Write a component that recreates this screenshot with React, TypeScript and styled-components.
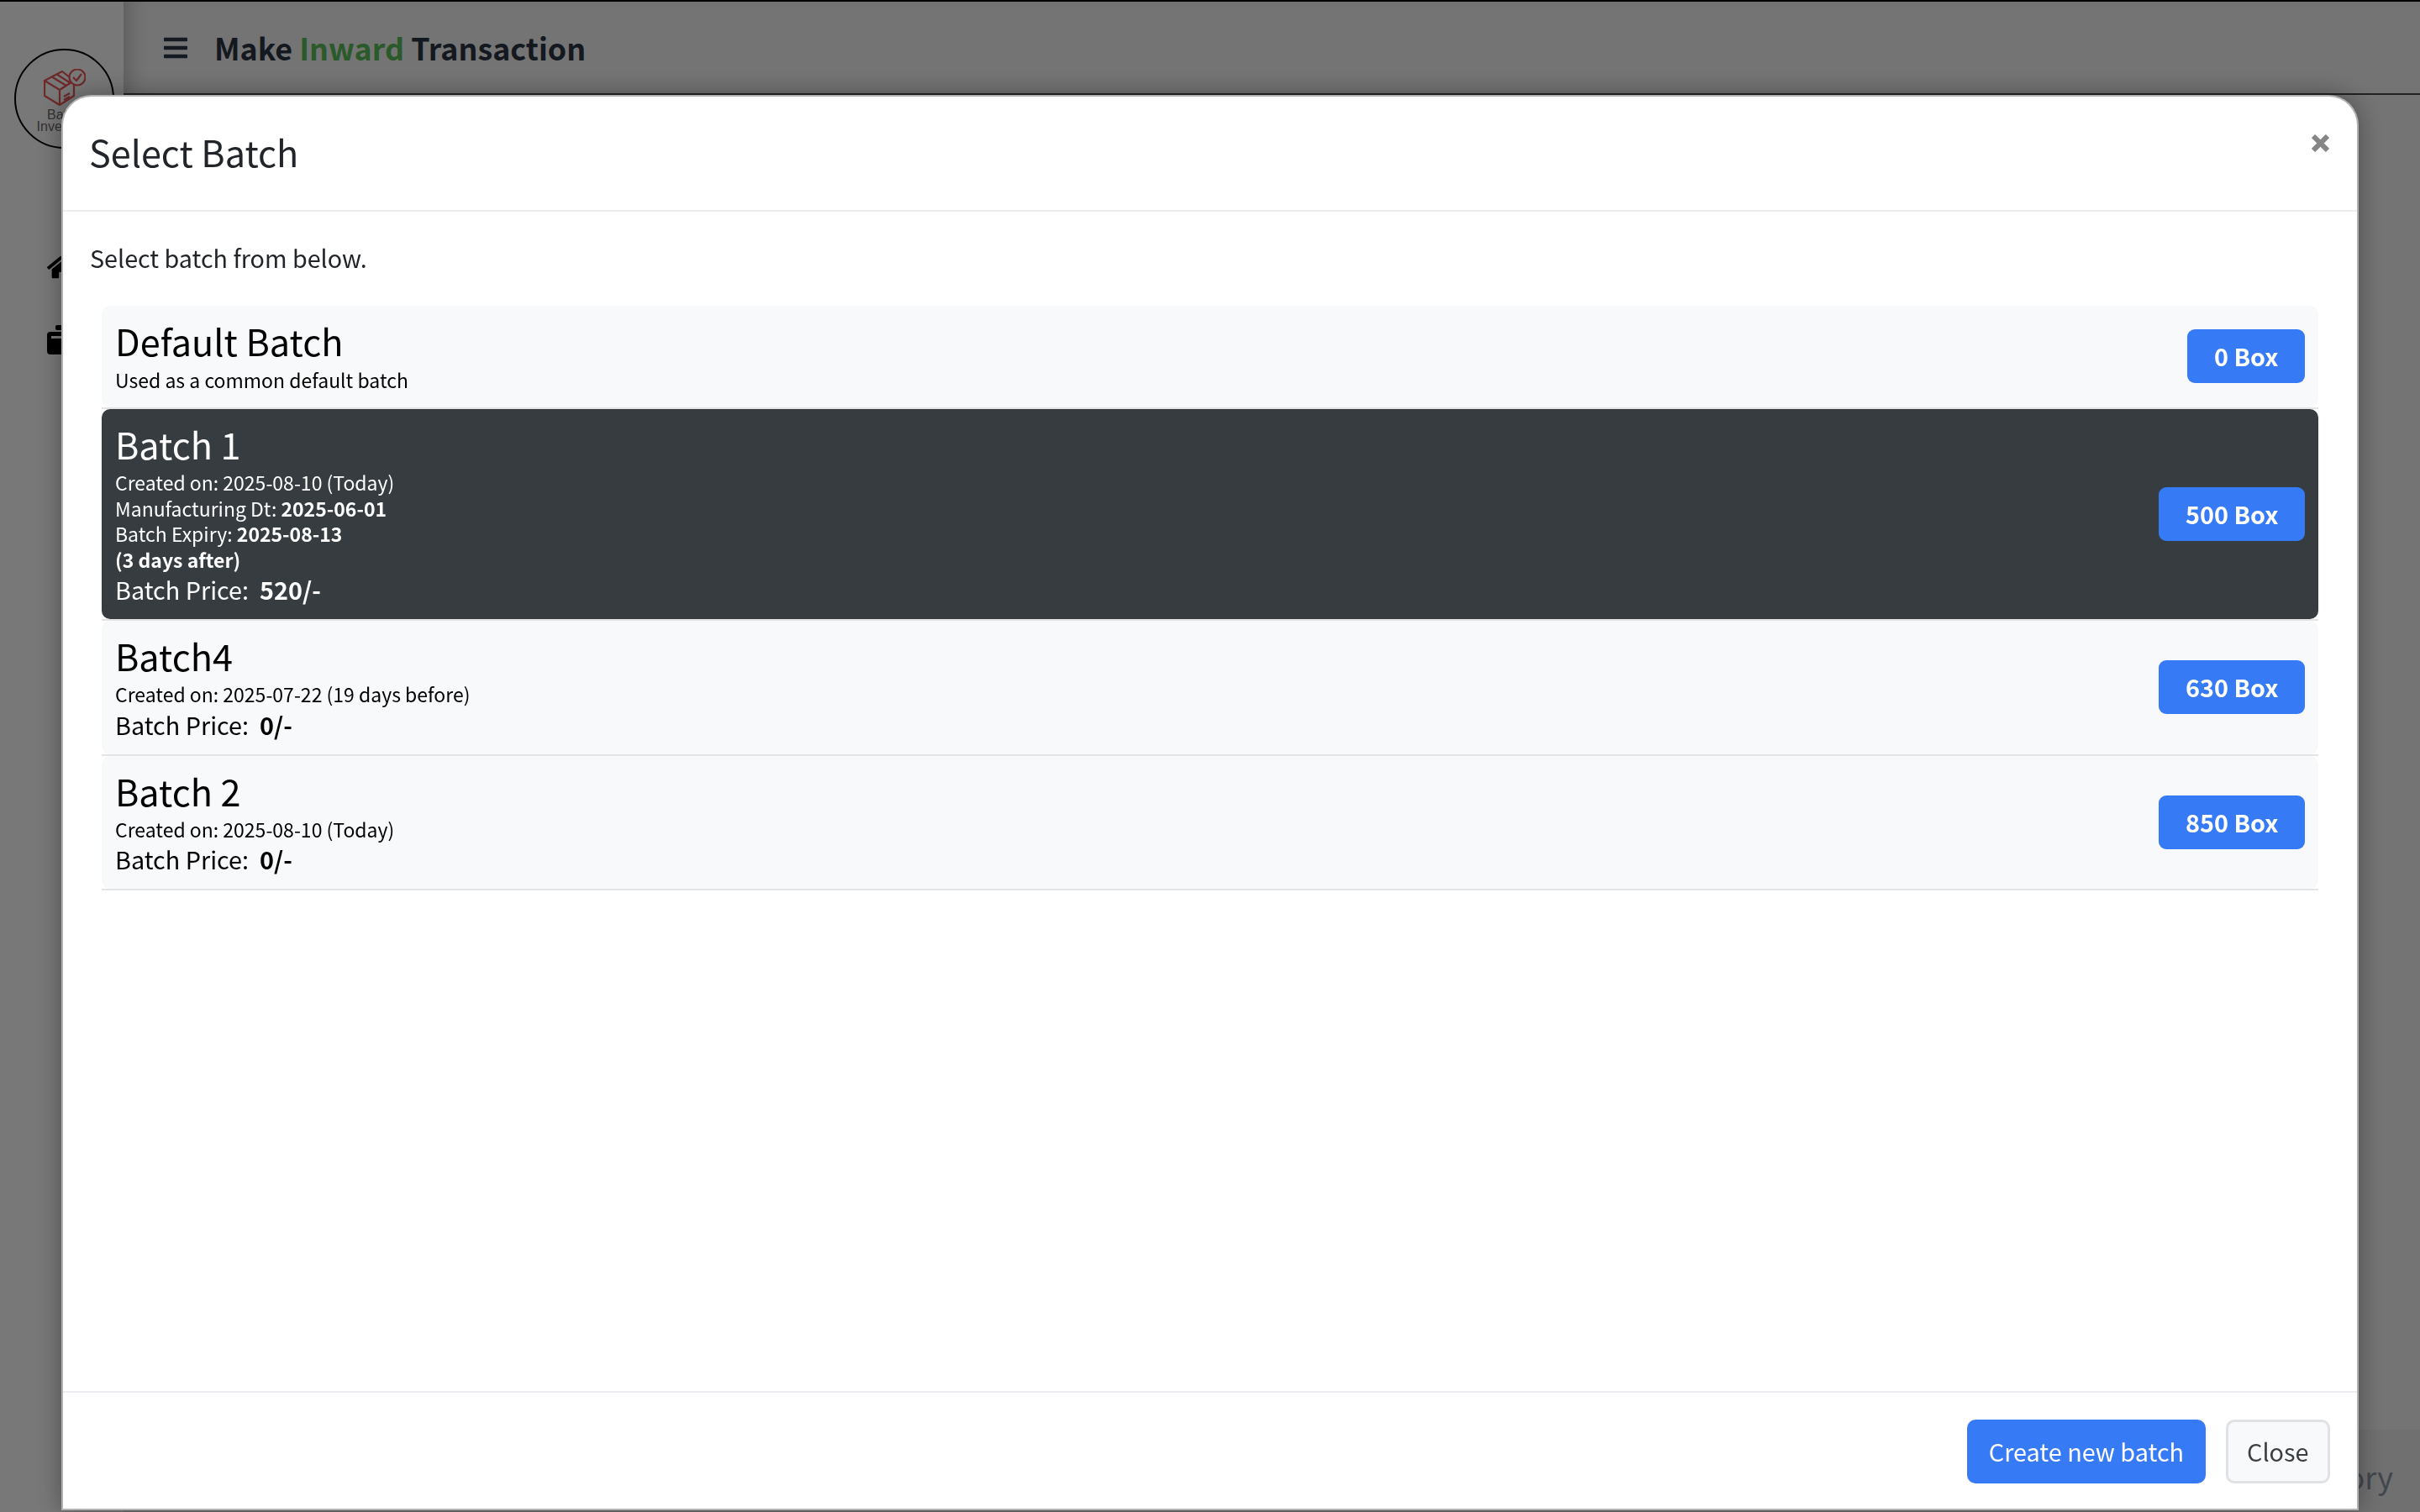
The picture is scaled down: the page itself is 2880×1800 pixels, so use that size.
import React from "react";
import styled, { createGlobalStyle } from "styled-components";
import { FaBars, FaHome } from "react-icons/fa";

interface BatchRow {
  name: string;
  lines: React.ReactNode[];
  price?: string;
  qty: string;
  active?: boolean;
}

const GlobalStyle = createGlobalStyle`
  html, body {
    margin: 0;
    height: 100%;
    overflow: hidden;
    font-family: "Noto Sans CJK SC", "Noto Sans", sans-serif;
  }
  * { box-sizing: border-box; }
`;

const Page = styled.div`
  display: flex;
  width: 2880px;
  height: 1800px;
  background: #e8e8e8;
  border-top: 2px solid #000;
`;

const Sidebar = styled.aside`
  flex: 0 0 147px;
  display: flex;
  flex-direction: column;
  background: #f0f0f0;
`;

const LogoCircle = styled.div`
  width: 119px;
  height: 119px;
  margin: 56px 0 0 17px;
  padding-top: 22px;
  display: flex;
  flex-direction: column;
  align-items: center;
  border: 2px solid #000;
  border-radius: 50%;
  font-family: "Liberation Sans", Arial, sans-serif;
  font-size: 16px;
  line-height: 14px;
  color: #666;
  text-align: center;

  svg {
    margin-bottom: 2px;
  }
`;

const SideNav = styled.nav`
  display: flex;
  flex-direction: column;
  gap: 52px;
  margin-top: 124px;
  padding-left: 56px;
  font-size: 34px;
  line-height: 0;
  color: #000;
`;

const Main = styled.main`
  flex: 1;
  display: flex;
  flex-direction: column;
  justify-content: space-between;
`;

const TopBar = styled.header`
  display: flex;
  align-items: center;
  gap: 30px;
  height: 111px;
  padding-left: 46px;
  border-bottom: 2px solid #40454c;
  box-shadow: inset 24px 0 24px -18px rgba(0, 0, 0, 0.22);
  color: #2a3344;
  font-size: 32px;
`;

const PageTitle = styled.h1`
  margin: 0 0 2px;
  font-size: 35.85px;
  line-height: 50px;
  font-weight: 700;
  color: #28303f;
`;

const GreenWord = styled.span`
  color: #55b455;
`;

const BottomBar = styled.footer`
  height: 98px;
  padding: 30px 32px 0 0;
  background: #e0e0e0;
  text-align: right;
  font-size: 36px;
  line-height: 50px;
  color: #878d9a;
`;

const Backdrop = styled.div`
  position: fixed;
  inset: 0;
  background: rgba(0, 0, 0, 0.5);
`;

const ModalHost = styled.div`
  position: fixed;
  inset: 0;
  padding: 113px 73px 2px;
  display: flex;
`;

const Modal = styled.section`
  flex: 1;
  display: flex;
  flex-direction: column;
  background: #fff;
  border: 2px solid rgba(0, 0, 0, 0.3);
  border-radius: 36px 36px 0 0;
  box-shadow: 0 0 30px rgba(0, 0, 0, 0.35);
  color: #212529;
`;

const ModalHead = styled.div`
  display: flex;
  justify-content: space-between;
  align-items: flex-start;
  height: 137px;
  padding: 0 33px 0 31px;
  border-bottom: 2px solid #ecedf0;
`;

const ModalTitle = styled.h2`
  margin: 36px 0 0;
  font-size: 43.2px;
  line-height: 58px;
  font-weight: 400;
`;

const CloseX = styled.svg`
  width: 21px;
  height: 21px;
  margin-top: 45px;
`;

const ModalBody = styled.div`
  flex: 1;
  padding: 31px 32px;
`;

const Hint = styled.p`
  margin: 0 0 33px;
  font-size: 28.7px;
  line-height: 48px;
`;

const List = styled.div`
  display: flex;
  flex-direction: column;
  margin: 0 14px;
`;

const RowWrap = styled.div`
  border-bottom: 2px solid #e3e4e6;
`;

const Row = styled.div<{ $active?: boolean }>`
  display: flex;
  justify-content: space-between;
  align-items: center;
  padding: 13px 16px 17.5px;
  border-radius: 10px;
  background: ${(p) => (p.$active ? "#373c40" : "#f8f9fa")};
  color: ${(p) => (p.$active ? "#fff" : "#000")};
`;

const RowName = styled.div`
  margin-bottom: 2.5px;
  font-size: 43.2px;
  line-height: 57px;
`;

const RowLine = styled.div`
  font-size: 23px;
  line-height: 30.6px;
`;

const RowPrice = styled.div`
  margin: 1.5px 0 -1.5px;
  font-size: 28.8px;
  line-height: 38px;

  b {
    margin-left: 13px;
  }
`;

const QtyButton = styled.button`
  height: 64px;
  margin-top: 4.5px;
  padding: 0 31.5px;
  border: 0;
  border-radius: 9px;
  background: #377af6;
  color: #fff;
  font: 700 28.8px/64px "Noto Sans CJK SC", "Noto Sans", sans-serif;
`;

const ModalFoot = styled.div`
  display: flex;
  justify-content: flex-end;
  gap: 24px;
  height: 140px;
  padding: 32px 32px 0;
  border-top: 2px solid #ecedf0;
`;

const FootButton = styled.button<{ $primary?: boolean }>`
  height: 76px;
  padding: 0 ${(p) => (p.$primary ? 25.5 : 22.5)}px;
  border: ${(p) => (p.$primary ? "0" : "3px solid #dfe1e4")};
  border-radius: 10px;
  background: ${(p) => (p.$primary ? "#377af6" : "#f8f9fa")};
  color: ${(p) => (p.$primary ? "#fff" : "#3c3f42")};
  font: 400 28.8px/1 "Noto Sans CJK SC", "Noto Sans", sans-serif;
`;

const batches: BatchRow[] = [
  { name: "Default Batch", lines: ["Used as a common default batch"], qty: "0 Box" },
  {
    name: "Batch 1",
    active: true,
    lines: [
      "Created on: 2025-08-10 (Today)",
      <>Manufacturing Dt: <b>2025-06-01</b></>,
      <>Batch Expiry: <b>2025-08-13</b></>,
      <b>(3 days after)</b>,
    ],
    price: "520/-",
    qty: "500 Box",
  },
  { name: "Batch4", lines: ["Created on: 2025-07-22 (19 days before)"], price: "0/-", qty: "630 Box" },
  { name: "Batch 2", lines: ["Created on: 2025-08-10 (Today)"], price: "0/-", qty: "850 Box" },
];

const BoxLogo = () => (
  <svg width="50" height="46" viewBox="0 0 50 46" fill="none" stroke="#dc5252" strokeWidth="2.2" strokeLinejoin="round">
    <path d="M1 14 L22 3 L36 14 L36 32 L19 43 L1 32 Z" />
    <path d="M1 14 L19 25 L36 14 M19 25 L19 43" />
    <path d="M9 9 L27 20 M15 6 L32 17" />
    <path d="M24 33 L31 29 M24 37 L31 33" />
    <circle cx="40" cy="10" r="9.5" fill="#f0f0f0" />
    <path d="M35 10 L39 14 L45 6" />
  </svg>
);

const BriefcaseIcon = () => (
  <svg width="34" height="35" viewBox="0 0 34 35">
    <rect x="10" y="0" width="14" height="6" rx="2" fill="#000" />
    <rect x="0" y="8" width="34" height="27" rx="4" fill="#000" />
    <rect x="5" y="13" width="24" height="3" fill="#f0f0f0" />
  </svg>
);

export default function App() {
  return (
    <>
      <GlobalStyle />
      <Page>
        <Sidebar>
          <LogoCircle>
            <BoxLogo />
            <span>Batch</span>
            <span>Inventory</span>
          </LogoCircle>
          <SideNav>
            <FaHome />
            <BriefcaseIcon />
          </SideNav>
        </Sidebar>
        <Main>
          <TopBar>
            <FaBars />
            <PageTitle>
              Make <GreenWord>Inward</GreenWord> Transaction
            </PageTitle>
          </TopBar>
          <BottomBar>Batch Inventory</BottomBar>
        </Main>
      </Page>
      <Backdrop />
      <ModalHost>
        <Modal>
          <ModalHead>
            <ModalTitle>Select Batch</ModalTitle>
            <CloseX viewBox="0 0 21 21" stroke="#868686" strokeWidth="6">
              <path d="M2 2 L19 19 M19 2 L2 19" />
            </CloseX>
          </ModalHead>
          <ModalBody>
            <Hint>Select batch from below.</Hint>
            <List>
              {batches.map((b) => (
                <RowWrap key={b.name}>
                  <Row $active={b.active}>
                    <div>
                      <RowName>{b.name}</RowName>
                      {b.lines.map((line, i) => (
                        <RowLine key={i}>{line}</RowLine>
                      ))}
                      {b.price && (
                        <RowPrice>
                          Batch Price:<b>{b.price}</b>
                        </RowPrice>
                      )}
                    </div>
                    <QtyButton>{b.qty}</QtyButton>
                  </Row>
                </RowWrap>
              ))}
            </List>
          </ModalBody>
          <ModalFoot>
            <FootButton $primary>Create new batch</FootButton>
            <FootButton>Close</FootButton>
          </ModalFoot>
        </Modal>
      </ModalHost>
    </>
  );
}
